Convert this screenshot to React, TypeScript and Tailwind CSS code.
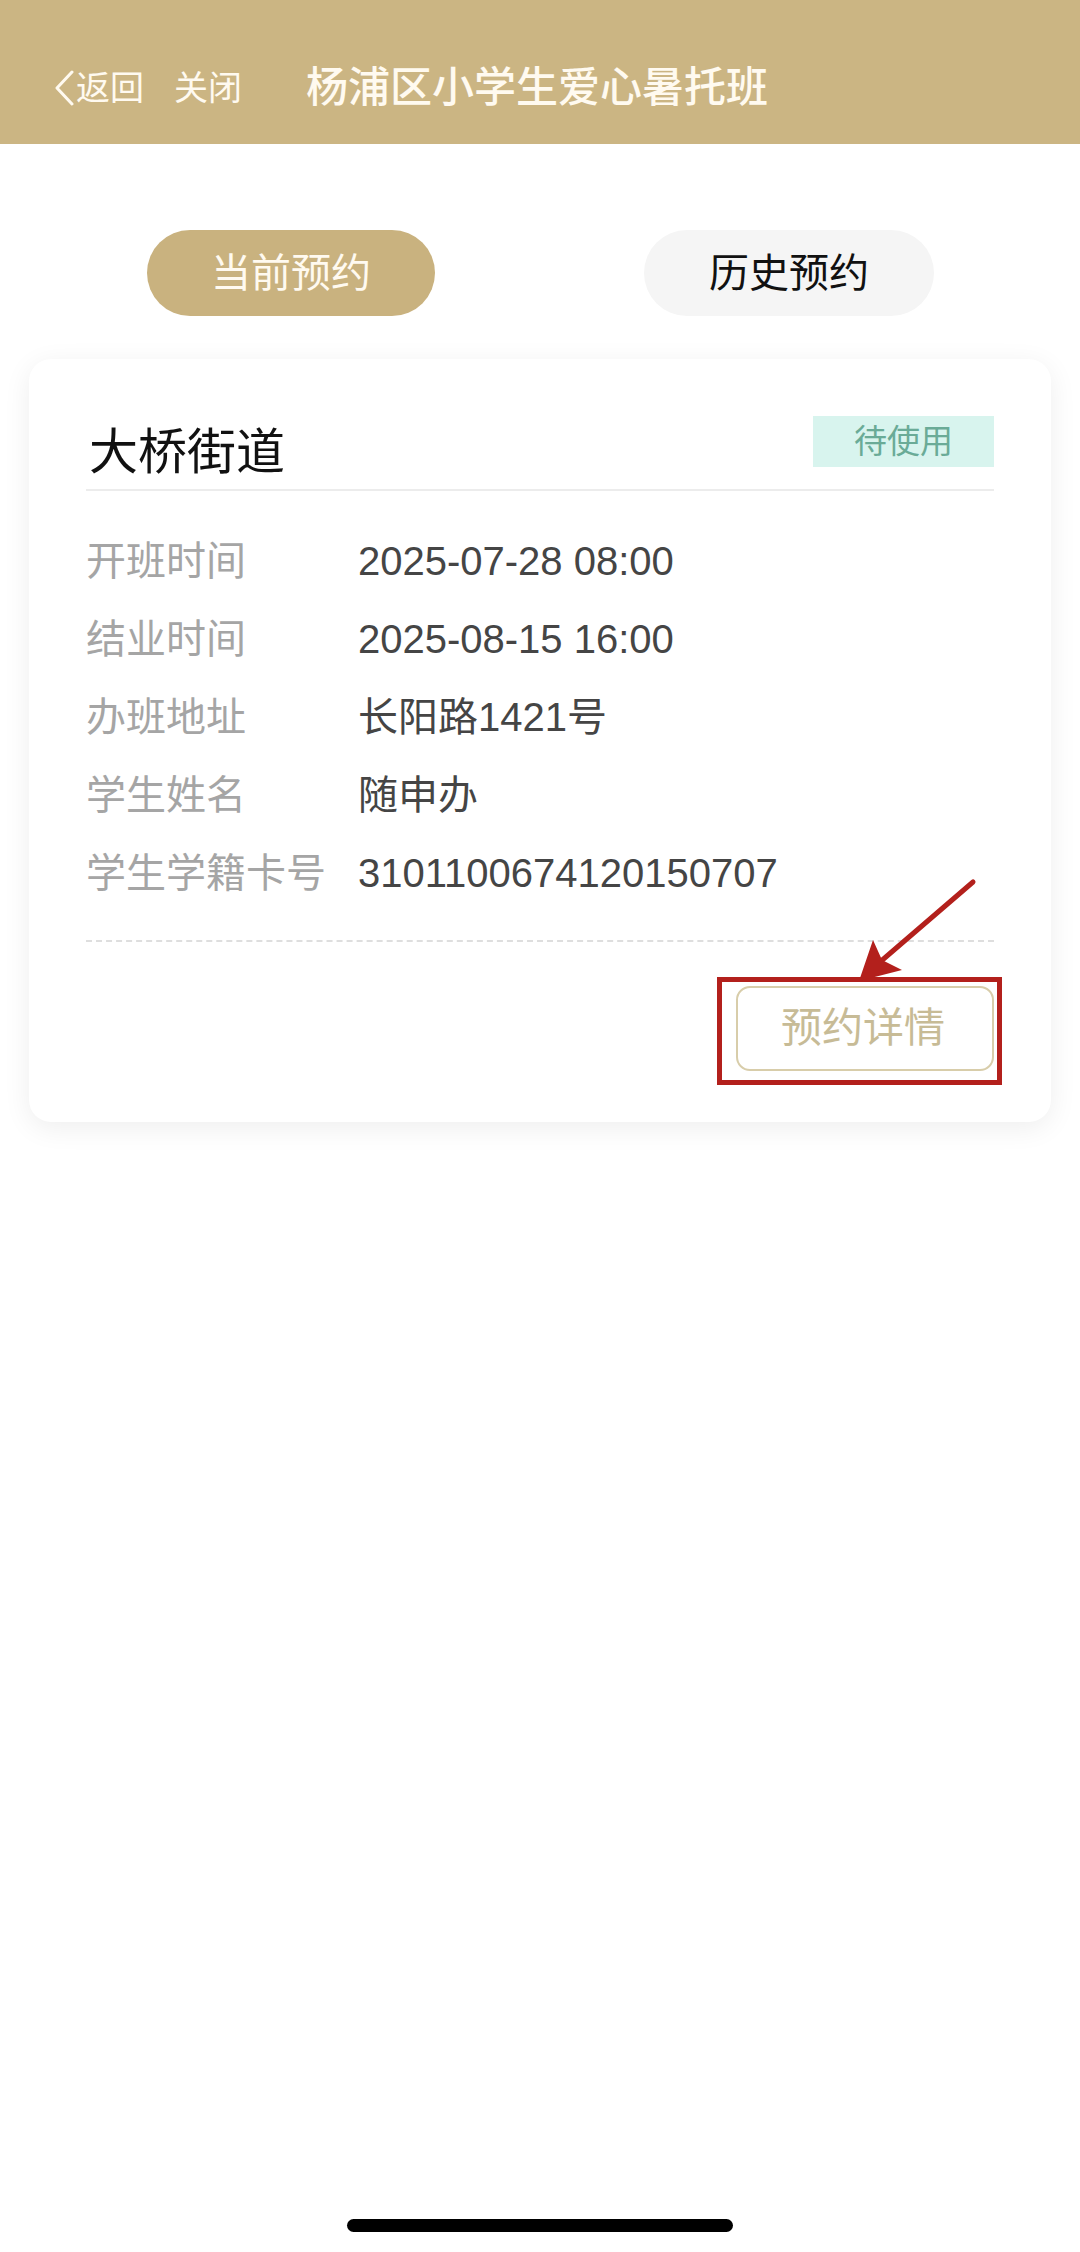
import React from "react";

const rows: [string, string][] = [
  ["开班时间", "2025-07-28 08:00"],
  ["结业时间", "2025-08-15 16:00"],
  ["办班地址", "长阳路1421号"],
  ["学生姓名", "随申办"],
  ["学生学籍卡号", "3101100674120150707"],
];

export default function App() {
  return (
    <div
      className="relative w-[1080px] h-[2252px] bg-white overflow-hidden"
      style={{ fontFamily: '"Liberation Sans", "Noto Sans CJK SC", sans-serif' }}
    >
      {/* Header */}
      <div className="h-[144px] bg-[#cbb583] flex items-center pt-[32px] pl-[53px] text-[#fffaf0]">
        <svg width="22" height="36" viewBox="0 0 22 36" className="shrink-0">
          <polyline points="19,2 4,18 19,34" fill="none" stroke="#fffaf0" strokeWidth="3" strokeLinecap="round" strokeLinejoin="round" />
        </svg>
        <span className="ml-[1px] text-[34px] leading-[48px]">返回</span>
        <span className="ml-[30px] text-[34px] leading-[48px]">关闭</span>
        <span className="ml-[64px] text-[42px] leading-[56px] font-medium">杨浦区小学生爱心暑托班</span>
      </div>

      {/* Tabs */}
      <div className="mt-[86px] px-[42px] grid grid-cols-2">
        <div className="flex justify-center">
          <div className="w-[288px] h-[86px] rounded-full bg-[#c9b27f] flex items-center justify-center text-[40px] text-[#fffaf0]">
            当前预约
          </div>
        </div>
        <div className="flex justify-center">
          <div className="w-[290px] h-[86px] rounded-full bg-[#f5f5f5] flex items-center justify-center text-[40px] text-[#111]">
            历史预约
          </div>
        </div>
      </div>

      {/* Card */}
      <div className="mt-[43px] mx-[29px] rounded-[22px] bg-white shadow-[0_6px_28px_rgba(0,0,0,0.07)] px-[57px] pt-[57px] pb-[51px]">
        <div className="flex justify-between items-start pb-[4px] border-b-2 border-[#ececec]">
          <div className="ml-[3px] mt-[4px] text-[49px] leading-[65px] text-[#111]">大桥街道</div>
          <div className="w-[181px] h-[51px] bg-[#d8f4ee] text-[#6aab97] text-[33px] flex items-center justify-center">
            待使用
          </div>
        </div>

        <div className="mt-[31px]">
          {rows.map(([label, value]) => (
            <div key={label} className="grid grid-cols-[272px_1fr] text-[40px] leading-[78px]">
              <span className="text-[#a5a5a5]">{label}</span>
              <span className="text-[#454545]">{value}</span>
            </div>
          ))}
        </div>

        <div className="mt-[28px] border-t-2 border-dashed border-[#dedede]" />

        <div className="mt-[44px] flex justify-end">
          <div className="w-[258px] h-[85px] rounded-[14px] border-2 border-[#d8cdaa] flex items-center justify-center text-[41px] text-[#c7bb96] pr-[4px]">
            预约详情
          </div>
        </div>
      </div>

      {/* Annotation: red box */}
      <div className="absolute left-[717px] top-[977px] w-[285px] h-[108px] border-[5px] border-[#b3201c]" />

      {/* Annotation: red arrow */}
      <svg className="absolute left-0 top-0" width="1080" height="1100" viewBox="0 0 1080 1100">
        <line x1="973" y1="882" x2="880" y2="962" stroke="#b3201c" strokeWidth="5" strokeLinecap="round" />
        <polygon points="859,981 873,940 882,960 902,970" fill="#b3201c" />
      </svg>

      {/* Home indicator */}
      <div className="absolute left-[347px] top-[2219px] w-[386px] h-[13px] rounded-full bg-black" />
    </div>
  );
}
